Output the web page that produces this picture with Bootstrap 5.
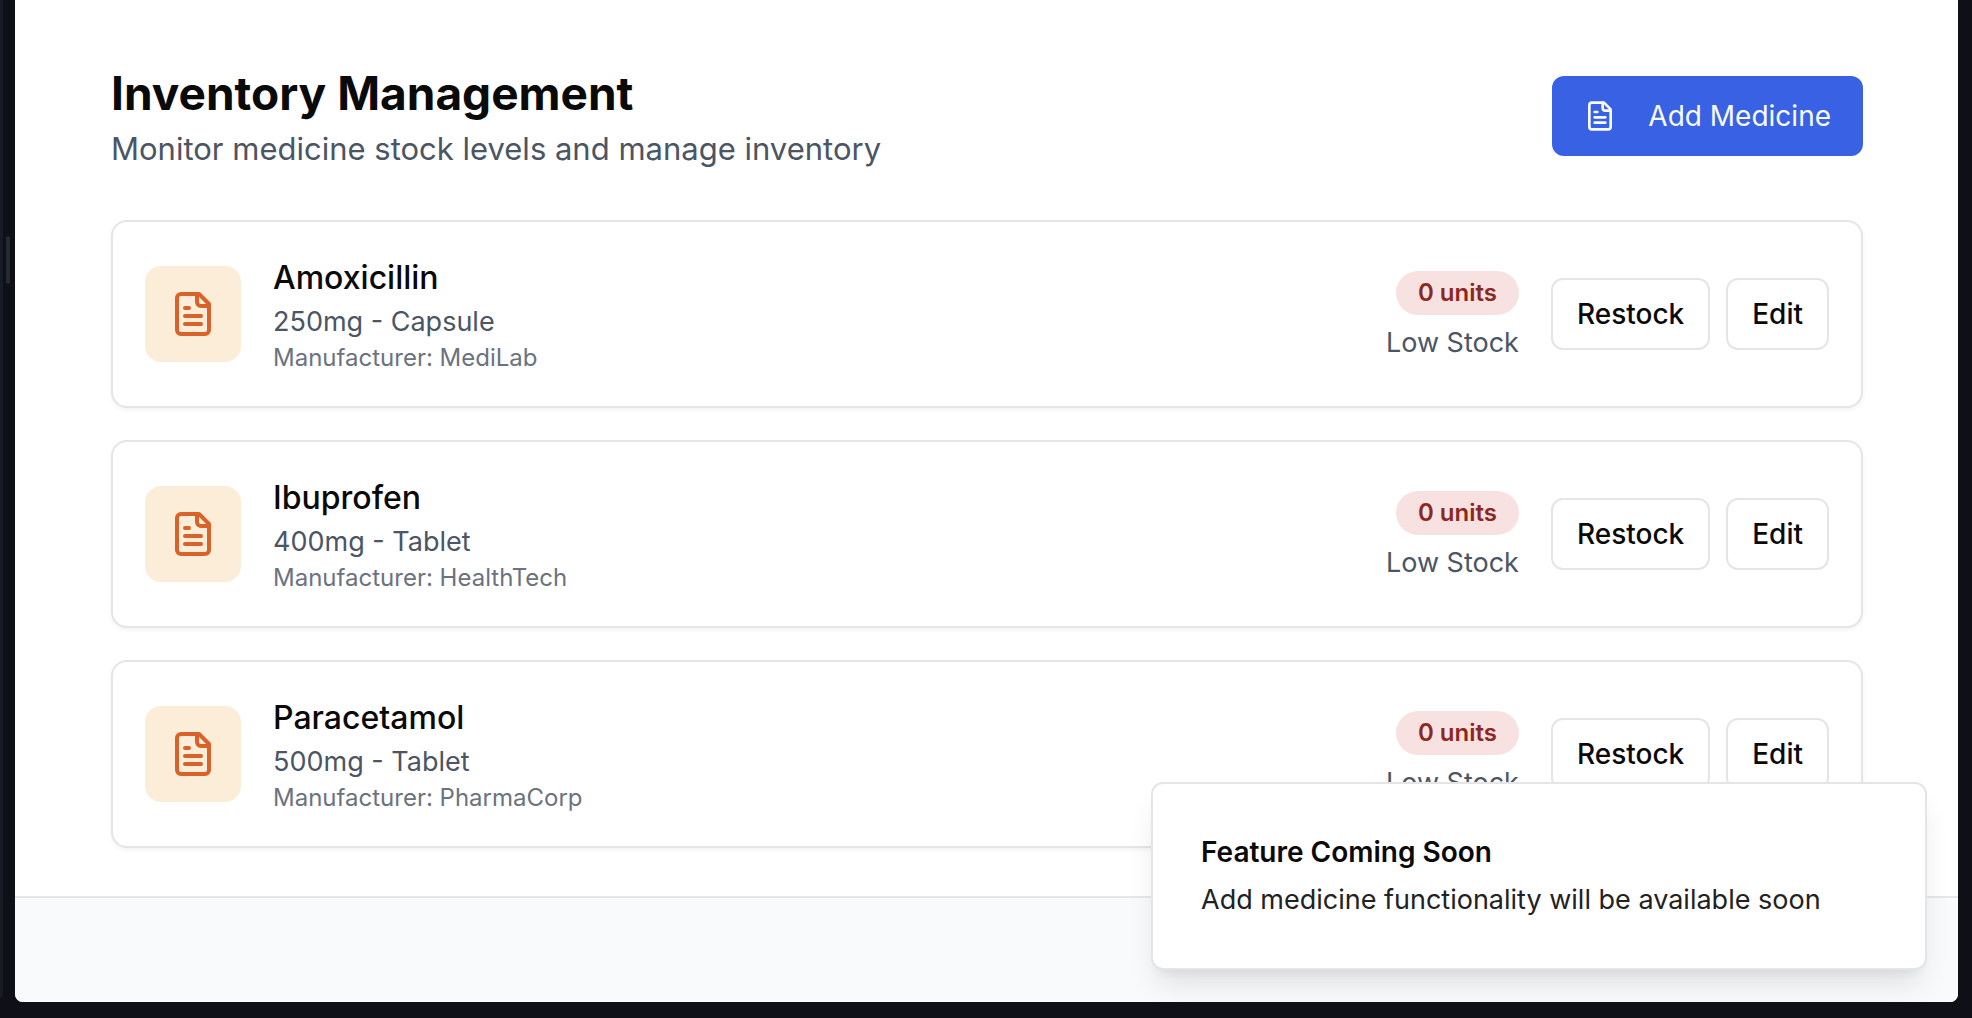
<!DOCTYPE html>
<html lang="en">
<head>
<meta charset="utf-8">
<meta name="viewport" content="width=device-width, initial-scale=1">
<title>Inventory Management</title>
<link rel="stylesheet" href="https://cdn.jsdelivr.net/npm/bootstrap@5.3.0/dist/css/bootstrap.min.css">
<style>
  :root { --line: #e5e5e5; --ink: #0a0a0a; --slate: #4b5563; --muted: #6b7280; }
  body { font-family: Inter, "Liberation Sans", sans-serif; color: var(--ink); background: #0f0f18; }
  .shell { padding: 0 14px 16px 0; }
  .gutter { width: 15px; padding-bottom: 4px; }
  .gutter-edge { width: 3px; background: #191b24; border-bottom-right-radius: 4px; }
  .gutter-grip { left: 6px; top: 236px; width: 4px; height: 48px; background: #262a32; border-radius: 2px; }
  .page { border-radius: 0 0 8px 8px; overflow: hidden; }
  .content { padding: 60px 95px 48px 96px; }
  .page-head { margin-bottom: 48px; }
  .page-title { font-size: 46px; line-height: 66px; font-weight: 700; }
  .page-sub { font-size: 31px; line-height: 46px; color: var(--slate); }
  .t-name { font-size: 32px; line-height: 48px; font-weight: 500; }
  .t-body { font-size: 27px; line-height: 40px; }
  .t-strong { font-size: 28px; line-height: 40px; font-weight: 600; }
  .t-fine { font-size: 24px; line-height: 32px; }
  .c-slate { color: var(--slate); }
  .c-muted { color: var(--muted); }
  .stack { gap: 32px; }
  .btn { --bs-btn-font-size: 28px; --bs-btn-line-height: 40px; --bs-btn-font-weight: 500; --bs-btn-border-radius: 12px; }
  .btn-add { --bs-btn-color: #f8fafc; --bs-btn-bg: #3862e3; --bs-btn-hover-color: #fff; --bs-btn-hover-bg: #2f55cc;
    --bs-btn-font-weight: 400; --bs-btn-padding-x: 32px; --bs-btn-padding-y: 20px; --bs-btn-border-width: 0; gap: 32px; }
  .btn-line { --bs-btn-color: var(--ink); --bs-btn-bg: #fff; --bs-btn-border-color: var(--line); --bs-btn-border-width: 2px;
    --bs-btn-hover-bg: #f5f5f5; --bs-btn-hover-border-color: var(--line); --bs-btn-padding-x: 24px; --bs-btn-padding-y: 14px; }
  .med-card { border: 2px solid var(--line); border-radius: 16px; box-shadow: 0 2px 4px rgba(0,0,0,.05); }
  .med-card .card-body { padding: 32px; gap: 32px; }
  .med-icon { width: 96px; height: 96px; border-radius: 16px; background: #fcedd9; color: #d9622b; }
  .stock { padding-top: 6px; gap: 8px; }
  .units { font-size: 24px; line-height: 32px; font-weight: 600; padding: 6px 22px; background: #f8e1e1; color: #8c2822; }
  .notice { right: 31px; bottom: 32px; width: 776px; max-width: calc(100% - 62px); padding: 48px; background: #fff;
    border: 2px solid var(--line); border-radius: 12px; box-shadow: 0 20px 30px -6px rgba(0,0,0,.1), 0 8px 12px -8px rgba(0,0,0,.1); }
  .notice-body { gap: 8px; }
  .notice-text { color: #222; }
  .foot { background: #f9fafc; border-top: 2px solid #e5e7eb; }
  .ico { fill: none; stroke: currentColor; stroke-width: 2; stroke-linecap: round; stroke-linejoin: round; }
</style>
<script src="https://cdn.jsdelivr.net/npm/bootstrap@5.3.0/dist/js/bootstrap.bundle.min.js"></script>
</head>
<body>
<svg class="d-none" aria-hidden="true">
  <symbol id="file-text" viewBox="0 0 24 24">
    <path d="M15 2H6a2 2 0 0 0-2 2v16a2 2 0 0 0 2 2h12a2 2 0 0 0 2-2V7Z"/>
    <path d="M14 2v4a2 2 0 0 0 2 2h4"/>
    <path d="M10 9H8"/><path d="M16 13H8"/><path d="M16 17H8"/>
  </symbol>
</svg>
<div class="shell d-flex min-vh-100">
  <div class="gutter d-flex flex-shrink-0 position-relative">
    <div class="gutter-edge"></div>
    <div class="gutter-grip position-absolute"></div>
  </div>
  <div class="page bg-white flex-grow-1 d-flex flex-column position-relative">
    <main class="content">
      <header class="page-head d-flex justify-content-between align-items-center">
        <div>
          <h1 class="page-title mb-0">Inventory Management</h1>
          <p class="page-sub mb-0">Monitor medicine stock levels and manage inventory</p>
        </div>
        <button type="button" class="btn btn-add d-flex align-items-center">
          <svg class="ico" width="32" height="32" aria-hidden="true"><use href="#file-text"/></svg>
          Add Medicine
        </button>
      </header>

      <div class="stack d-flex flex-column">
        <article class="card med-card">
          <div class="card-body d-flex align-items-center">
            <div class="med-icon d-flex align-items-center justify-content-center flex-shrink-0">
              <svg class="ico" width="48" height="48" aria-hidden="true"><use href="#file-text"/></svg>
            </div>
            <div class="flex-grow-1">
              <h2 class="t-name mb-0">Amoxicillin</h2>
              <p class="t-body c-slate mb-0">250mg - Capsule</p>
              <p class="t-fine c-muted mb-0">Manufacturer: MediLab</p>
            </div>
            <div class="stock d-flex flex-column align-items-end">
              <span class="units rounded-pill">0 units</span>
              <span class="t-body c-slate">Low Stock</span>
            </div>
            <div class="d-flex gap-3">
              <button type="button" class="btn btn-line">Restock</button>
              <button type="button" class="btn btn-line">Edit</button>
            </div>
          </div>
        </article>

        <article class="card med-card">
          <div class="card-body d-flex align-items-center">
            <div class="med-icon d-flex align-items-center justify-content-center flex-shrink-0">
              <svg class="ico" width="48" height="48" aria-hidden="true"><use href="#file-text"/></svg>
            </div>
            <div class="flex-grow-1">
              <h2 class="t-name mb-0">Ibuprofen</h2>
              <p class="t-body c-slate mb-0">400mg - Tablet</p>
              <p class="t-fine c-muted mb-0">Manufacturer: HealthTech</p>
            </div>
            <div class="stock d-flex flex-column align-items-end">
              <span class="units rounded-pill">0 units</span>
              <span class="t-body c-slate">Low Stock</span>
            </div>
            <div class="d-flex gap-3">
              <button type="button" class="btn btn-line">Restock</button>
              <button type="button" class="btn btn-line">Edit</button>
            </div>
          </div>
        </article>

        <article class="card med-card">
          <div class="card-body d-flex align-items-center">
            <div class="med-icon d-flex align-items-center justify-content-center flex-shrink-0">
              <svg class="ico" width="48" height="48" aria-hidden="true"><use href="#file-text"/></svg>
            </div>
            <div class="flex-grow-1">
              <h2 class="t-name mb-0">Paracetamol</h2>
              <p class="t-body c-slate mb-0">500mg - Tablet</p>
              <p class="t-fine c-muted mb-0">Manufacturer: PharmaCorp</p>
            </div>
            <div class="stock d-flex flex-column align-items-end">
              <span class="units rounded-pill">0 units</span>
              <span class="t-body c-slate">Low Stock</span>
            </div>
            <div class="d-flex gap-3">
              <button type="button" class="btn btn-line">Restock</button>
              <button type="button" class="btn btn-line">Edit</button>
            </div>
          </div>
        </article>
      </div>
    </main>
    <footer class="foot flex-grow-1"></footer>

    <div class="notice position-absolute" role="status">
      <div class="notice-body d-flex flex-column">
        <div class="t-strong">Feature Coming Soon</div>
        <div class="t-body notice-text">Add medicine functionality will be available soon</div>
      </div>
    </div>
  </div>
</div>
</body>
</html>
